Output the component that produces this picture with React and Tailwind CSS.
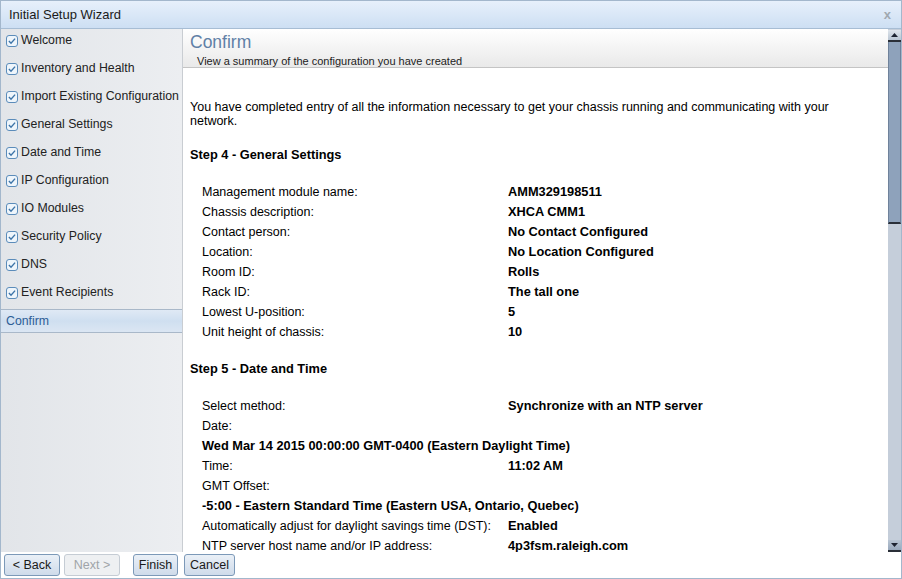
import React from "react";

const Check = () => (
  <svg width="12" height="12" viewBox="0 0 12 12" className="shrink-0">
    <rect x="0.5" y="0.5" width="11" height="11" rx="2.5" fill="#eef5fb" stroke="#5b8cba" />
    <path d="M2.9 6.1 L5 8.2 L9.1 3.6" fill="none" stroke="#3d74a8" strokeWidth="1.4" />
  </svg>
);

const steps = [
  "Welcome",
  "Inventory and Health",
  "Import Existing Configuration",
  "General Settings",
  "Date and Time",
  "IP Configuration",
  "IO Modules",
  "Security Policy",
  "DNS",
  "Event Recipients",
];

const Row = ({ label, value }) => (
  <div className="flex h-[20px] items-center pl-[12px]">
    <div className="w-[306px] shrink-0">{label}</div>
    <div className="font-bold text-[12.8px]">{value}</div>
  </div>
);

const Full = ({ children, bold }) => (
  <div className={"flex h-[20px] items-center pl-[12px] " + (bold ? "font-bold text-[12.8px]" : "")}>{children}</div>
);

export default function App() {
  return (
    <div className="w-[902px] h-[579px] flex flex-col overflow-hidden border border-[#a3b7cc] bg-white text-[12.5px] text-black font-['Liberation_Sans',Arial,sans-serif]">
      {/* Title bar */}
      <div className="h-[28px] shrink-0 flex items-center justify-between pl-[8px] pr-[10px] bg-gradient-to-b from-[#e7f0fb] to-[#cddff3] border-b border-[#a7bdd4]">
        <span className="text-[13px] text-[#1a1a1a]">Initial Setup Wizard</span>
        <span className="text-[13px] text-[#a0a8b0] font-bold">x</span>
      </div>

      <div className="flex flex-1 min-h-0">
        {/* Sidebar */}
        <div className="w-[182px] shrink-0 flex flex-col bg-gradient-to-r from-[#e2e5e9] to-[#eceef1] border-r border-[#c9cdd2] text-[12.3px]">
          {steps.map((s) => (
            <div key={s} className="h-[28px] shrink-0 flex items-start pt-[6px] pl-[5px] gap-[3px] text-[#222]">
              <Check />
              <span className="leading-[14px] -mt-[2px]">{s}</span>
            </div>
          ))}
          <div className="h-[24px] shrink-0 flex items-center pl-[5px] border-y border-[#a9b8c9] bg-gradient-to-b from-[#dfe9f5] via-[#cfdff0] to-[#dbe6f3] text-[#2d5d96]">
            Confirm
          </div>
        </div>

        {/* Main */}
        <div className="flex flex-1 min-w-0">
          <div className="flex flex-col flex-1 min-w-0">
            <div className="h-[39px] shrink-0 flex flex-col bg-gradient-to-b from-white to-[#e9e9e9] border-b border-[#c4c4c4] pl-[7px]">
              <div className="text-[17.5px] leading-[20px] mt-[3px] text-[#6080a6]">Confirm</div>
              <div className="text-[11px] leading-[13px] pl-[7px] mt-[3px] text-[#222]">
                View a summary of the configuration you have created
              </div>
            </div>
            <div className="flex-1 min-h-0 overflow-hidden pl-[7px] pt-[32px] leading-[14px]">
              <p className="pr-[40px]">
                You have completed entry of all the information necessary to get your chassis running and communicating with your network.
              </p>
              <div className="mt-[20px] font-bold text-[12.8px]">Step 4 - General Settings</div>
              <div className="mt-[20px]">
                <Row label="Management module name:" value="AMM329198511" />
                <Row label="Chassis description:" value="XHCA CMM1" />
                <Row label="Contact person:" value="No Contact Configured" />
                <Row label="Location:" value="No Location Configured" />
                <Row label="Room ID:" value="Rolls" />
                <Row label="Rack ID:" value="The tall one" />
                <Row label="Lowest U-position:" value="5" />
                <Row label="Unit height of chassis:" value="10" />
              </div>
              <div className="mt-[20px] font-bold text-[12.8px]">Step 5 - Date and Time</div>
              <div className="mt-[20px]">
                <Row label="Select method:" value="Synchronize with an NTP server" />
                <Full>Date:</Full>
                <Full bold>Wed Mar 14 2015 00:00:00 GMT-0400 (Eastern Daylight Time)</Full>
                <Row label="Time:" value="11:02 AM" />
                <Full>GMT Offset:</Full>
                <Full bold>-5:00 - Eastern Standard Time (Eastern USA, Ontario, Quebec)</Full>
                <Row label="Automatically adjust for daylight savings time (DST):" value="Enabled" />
                <Row label="NTP server host name and/or IP address:" value="4p3fsm.raleigh.com" />
              </div>
            </div>
          </div>

          {/* Scrollbar */}
          <div className="w-[13px] shrink-0 flex flex-col pt-[1px] bg-[#c5ceda]">
            <div className="h-[12px] shrink-0 flex items-center justify-center bg-gradient-to-b from-[#dfe5ec] to-[#b9c5d3] border-b-2 border-[#2a2f38]">
              <svg width="7" height="4" viewBox="0 0 7 4"><path d="M0 4 L3.5 0 L7 4 Z" fill="#1c2230" /></svg>
            </div>
            <div className="h-[182px] shrink-0 bg-[#8ea2bb] border-x border-[#6f829b] border-b-2 border-b-[#2a2f38]" />
            <div className="flex-1" />
            <div className="h-[12px] shrink-0 flex items-center justify-center bg-gradient-to-b from-[#b9c5d3] to-[#98a8bc] border-b-2 border-[#2a2f38]">
              <svg width="7" height="4" viewBox="0 0 7 4"><path d="M0 0 L3.5 4 L7 0 Z" fill="#1c2230" /></svg>
            </div>
          </div>
        </div>
      </div>

      {/* Footer */}
      <div className="h-[26px] shrink-0 flex items-center pl-[3px] bg-white">
        <button className="h-[22px] w-[56px] rounded-[3px] border border-[#7c99b8] bg-gradient-to-b from-[#eaf0f7] to-[#cfdbea] text-[12.5px] text-[#1a1a1a]">&lt; Back</button>
        <button className="ml-[4px] h-[22px] w-[56px] rounded-[3px] border border-[#c5ccd4] bg-[#eef0f2] text-[12.5px] text-[#a0a4a8]">Next &gt;</button>
        <button className="ml-[13px] h-[22px] w-[45px] rounded-[3px] border border-[#7c99b8] bg-gradient-to-b from-[#eaf0f7] to-[#cfdbea] text-[12.5px] text-[#1a1a1a]">Finish</button>
        <button className="ml-[6px] h-[22px] w-[51px] rounded-[3px] border border-[#7c99b8] bg-gradient-to-b from-[#eaf0f7] to-[#cfdbea] text-[12.5px] text-[#1a1a1a]">Cancel</button>
      </div>
    </div>
  );
}
